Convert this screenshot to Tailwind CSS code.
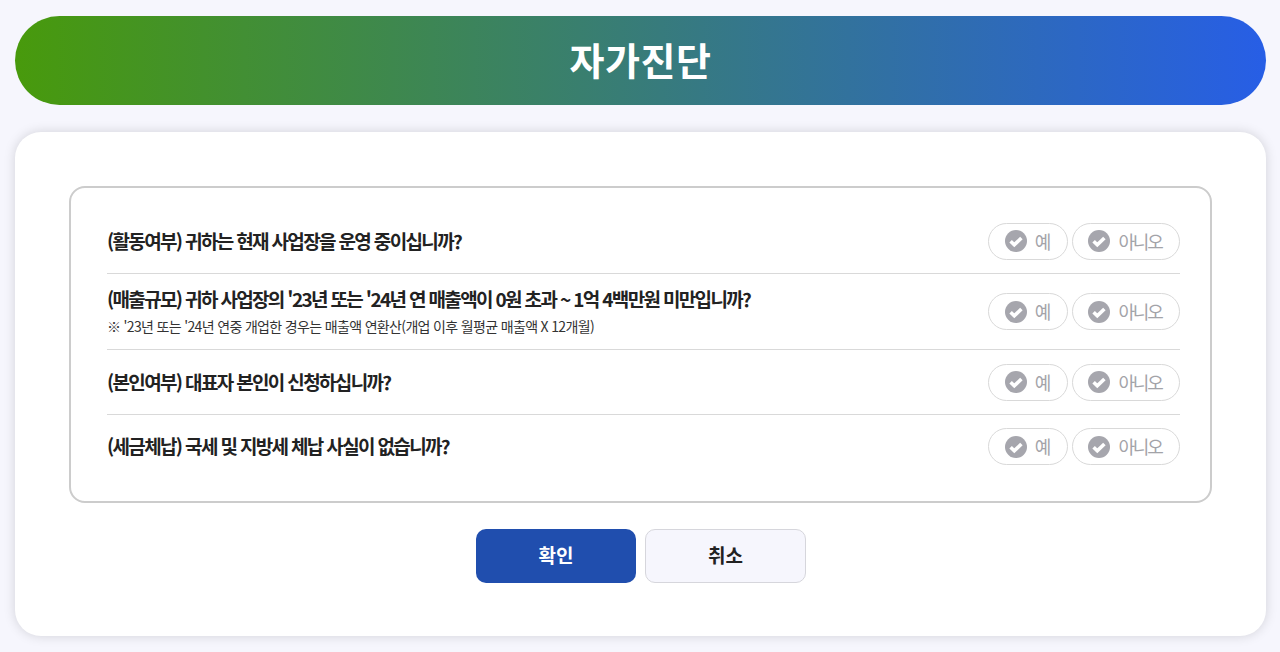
<!DOCTYPE html>
<html lang="ko">
<head>
    <meta charset="UTF-8">
    <meta name="viewport" content="width=device-width, initial-scale=1.0">
    <title>자가진단</title>
    <script src="https://cdn.jsdelivr.net/npm/@tailwindcss/browser@4"></script>
</head>
<body class="bg-[#f6f6fd] font-['Noto_Sans_CJK_KR',sans-serif] h-[652px] overflow-hidden">
    <div class="pl-[15px] pr-[14px] pt-4">
        <!-- 제목 -->
        <h1 class="h-[89px] pb-[4px] rounded-[45px] bg-[linear-gradient(to_right,#489a0c,#275ee6)] flex items-center justify-center text-white text-[38px] font-bold tracking-[0.5px]">자가진단</h1>

        <!-- 본문 카드 -->
        <div class="mt-[27px] h-[504px] bg-white rounded-[26px] shadow-[0_0_12px_rgba(0,0,0,0.15)] px-[54px] pt-[54px]">
            <div class="h-[317px] border-2 border-[#cccccc] rounded-[16px] pl-9 pr-[30px] pt-[21px]">

                <div class="h-[65px] flex items-center justify-between border-b border-[#d9d9d9]">
                    <p class="text-[19px] font-bold text-[#222222] tracking-[-1.65px]">(활동여부) 귀하는 현재 사업장을 운영 중이십니까?</p>
                    <div class="flex gap-1">
                        <button class="w-20 h-[37px] pr-[2px] rounded-full border border-[#d9d9d9] flex items-center justify-center gap-[8px] text-[#a3a3a8] text-[18px] tracking-[-2.2px]">
                            <svg class="w-[22px] h-[22px]" viewBox="0 0 22 22"><circle cx="11" cy="11" r="11" fill="#a6a6ad"/><path d="M5.6 11.2l3.7 3.6L16.4 8" fill="none" stroke="#fff" stroke-width="3.6"/></svg>예
                        </button>
                        <button class="w-[108px] h-[37px] pr-[2px] rounded-full border border-[#d9d9d9] flex items-center justify-center gap-[8px] text-[#a3a3a8] text-[18px] tracking-[-2.2px]">
                            <svg class="w-[22px] h-[22px]" viewBox="0 0 22 22"><circle cx="11" cy="11" r="11" fill="#a6a6ad"/><path d="M5.6 11.2l3.7 3.6L16.4 8" fill="none" stroke="#fff" stroke-width="3.6"/></svg>아니오
                        </button>
                    </div>
                </div>

                <div class="h-[76px] flex items-center justify-between border-b border-[#d9d9d9]">
                    <div>
                        <p class="text-[19px] leading-[26px] font-bold text-[#222222] tracking-[-1.65px]">(매출규모) 귀하 사업장의 '23년 또는 '24년 연 매출액이 0원 초과 ~ 1억 4백만원 미만입니까?</p>
                        <p class="mt-[2px] text-[14px] leading-[24px] text-[#333333] tracking-[-0.66px]">※ '23년 또는 '24년 연중 개업한 경우는 매출액 연환산(개업 이후 월평균 매출액 X 12개월)</p>
                    </div>
                    <div class="flex gap-1">
                        <button class="w-20 h-[37px] pr-[2px] rounded-full border border-[#d9d9d9] flex items-center justify-center gap-[8px] text-[#a3a3a8] text-[18px] tracking-[-2.2px]">
                            <svg class="w-[22px] h-[22px]" viewBox="0 0 22 22"><circle cx="11" cy="11" r="11" fill="#a6a6ad"/><path d="M5.6 11.2l3.7 3.6L16.4 8" fill="none" stroke="#fff" stroke-width="3.6"/></svg>예
                        </button>
                        <button class="w-[108px] h-[37px] pr-[2px] rounded-full border border-[#d9d9d9] flex items-center justify-center gap-[8px] text-[#a3a3a8] text-[18px] tracking-[-2.2px]">
                            <svg class="w-[22px] h-[22px]" viewBox="0 0 22 22"><circle cx="11" cy="11" r="11" fill="#a6a6ad"/><path d="M5.6 11.2l3.7 3.6L16.4 8" fill="none" stroke="#fff" stroke-width="3.6"/></svg>아니오
                        </button>
                    </div>
                </div>

                <div class="h-[65px] flex items-center justify-between border-b border-[#d9d9d9]">
                    <p class="text-[19px] font-bold text-[#222222] tracking-[-1.65px]">(본인여부) 대표자 본인이 신청하십니까?</p>
                    <div class="flex gap-1">
                        <button class="w-20 h-[37px] pr-[2px] rounded-full border border-[#d9d9d9] flex items-center justify-center gap-[8px] text-[#a3a3a8] text-[18px] tracking-[-2.2px]">
                            <svg class="w-[22px] h-[22px]" viewBox="0 0 22 22"><circle cx="11" cy="11" r="11" fill="#a6a6ad"/><path d="M5.6 11.2l3.7 3.6L16.4 8" fill="none" stroke="#fff" stroke-width="3.6"/></svg>예
                        </button>
                        <button class="w-[108px] h-[37px] pr-[2px] rounded-full border border-[#d9d9d9] flex items-center justify-center gap-[8px] text-[#a3a3a8] text-[18px] tracking-[-2.2px]">
                            <svg class="w-[22px] h-[22px]" viewBox="0 0 22 22"><circle cx="11" cy="11" r="11" fill="#a6a6ad"/><path d="M5.6 11.2l3.7 3.6L16.4 8" fill="none" stroke="#fff" stroke-width="3.6"/></svg>아니오
                        </button>
                    </div>
                </div>

                <div class="h-[63px] flex items-center justify-between">
                    <p class="text-[19px] font-bold text-[#222222] tracking-[-1.65px]">(세금체납) 국세 및 지방세 체납 사실이 없습니까?</p>
                    <div class="flex gap-1">
                        <button class="w-20 h-[37px] pr-[2px] rounded-full border border-[#d9d9d9] flex items-center justify-center gap-[8px] text-[#a3a3a8] text-[18px] tracking-[-2.2px]">
                            <svg class="w-[22px] h-[22px]" viewBox="0 0 22 22"><circle cx="11" cy="11" r="11" fill="#a6a6ad"/><path d="M5.6 11.2l3.7 3.6L16.4 8" fill="none" stroke="#fff" stroke-width="3.6"/></svg>예
                        </button>
                        <button class="w-[108px] h-[37px] pr-[2px] rounded-full border border-[#d9d9d9] flex items-center justify-center gap-[8px] text-[#a3a3a8] text-[18px] tracking-[-2.2px]">
                            <svg class="w-[22px] h-[22px]" viewBox="0 0 22 22"><circle cx="11" cy="11" r="11" fill="#a6a6ad"/><path d="M5.6 11.2l3.7 3.6L16.4 8" fill="none" stroke="#fff" stroke-width="3.6"/></svg>아니오
                        </button>
                    </div>
                </div>
            </div>

            <!-- 버튼 -->
            <div class="mt-[26px] flex justify-center gap-[9px]">
                <button class="ml-[1px] w-[160px] h-[54px] pb-[2px] rounded-[10px] bg-[#204eae] text-white text-[19px] font-bold">확인</button>
                <button class="w-[161px] h-[54px] pb-[2px] rounded-[10px] bg-[#f6f6fd] border border-[#d6d6dc] text-[#222222] text-[19px] font-bold">취소</button>
            </div>
        </div>
    </div>
</body>
</html>
